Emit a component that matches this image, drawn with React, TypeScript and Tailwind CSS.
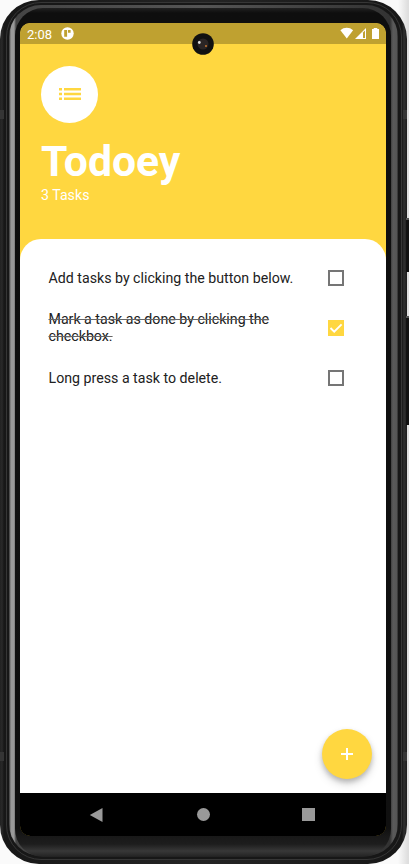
import React from "react";

type Task = { text: string; done: boolean };

const tasks: Task[] = [
  { text: "Add tasks by clicking the button below.", done: false },
  { text: "Mark a task as done by clicking the checkbox.", done: true },
  { text: "Long press a task to delete.", done: false },
];

function StatusBar() {
  return (
    <div className="flex h-[21px] shrink-0 items-center bg-[#bfa130] pl-[7px] pr-[6px] text-white">
      <span className="w-[34px] pt-px text-[13px] leading-none">2:08</span>
      <svg className="block" width="13" height="13" viewBox="0 0 13 13">
        <circle cx="6.5" cy="6.5" r="6.2" fill="#fff" />
        <path d="M3.2 3h2.9v6.8H3.2zM7 3h2.6v2.7H7z" fill="#bfa130" />
      </svg>
      <svg className="ml-auto block" width="40" height="13" viewBox="0 0 40 13">
        <path d="M.4 3.2C4-.1 9.5-.1 13.1 3.2L6.8 11.4z" fill="#fff" />
        <path d="M26 1v11H15z" fill="#fff" />
        <path d="M23 5.4L25 3.4V11H23z" fill="#bfa130" />
        <path d="M32 2h1.7V1h3.6v1H39v10h-7z" fill="#fff" />
      </svg>
    </div>
  );
}

function Checkbox({ done }: { done: boolean }) {
  if (!done) return <div className="size-4 shrink-0 border-2 border-[#757575]" />;
  return (
    <div className="size-4 shrink-0 bg-[#ffd740]">
      <svg className="block" width="16" height="16" viewBox="0 0 16 16">
        <path d="M2.5 8L6.2 11.7L13.6 4.3" fill="none" stroke="#fff" strokeWidth="1.9" />
      </svg>
    </div>
  );
}

function Camera() {
  return (
    <svg className="block" width="22" height="22" viewBox="0 0 22 22">
      <circle cx="11" cy="11" r="10.8" fill="#111" />
      <circle cx="11" cy="11" r="5.5" fill="#2b2525" />
      <circle cx="7.3" cy="9.5" r="1.4" fill="#ddd" />
      <path d="M13 12h2v2h-2z" fill="#a0602c" />
    </svg>
  );
}

function Screen() {
  return (
    <div className="relative flex h-[813px] w-[366px] flex-col rounded-[10px] bg-[#ffd740] [clip-path:inset(0_round_10px)]">
      <StatusBar />
      <header className="h-[195px] shrink-0 pl-[21px] pt-[22px] text-white">
        <div className="flex size-[57px] items-center justify-center rounded-full bg-white">
          <svg className="-mt-px block" width="22" height="12" viewBox="0 0 22 12">
            <path
              d="M0 0h3v2.5H0zM5 0h17v2.5H5zM0 4.8h3v2.4H0zM5 4.8h17v2.4H5zM0 9.5h3V12H0zM5 9.5h17V12H5z"
              fill="#ffd740"
            />
          </svg>
        </div>
        <h1 className="mt-[13px] text-[42.7px] font-bold leading-[51px]">Todoey</h1>
        <p className="text-[14.2px] leading-[17px]">3 Tasks</p>
      </header>
      <main className="flex-1 rounded-t-[21px] bg-white pt-[14px]">
        <ul>
          {tasks.map((task) => (
            <li
              key={task.text}
              className="flex h-[50px] items-center pl-[28.5px] pr-[42px] text-[14.2px] leading-[17px] text-[#212121]"
            >
              <div className="w-[279.5px] shrink-0 pr-[24px]">
                <span className={task.done ? "line-through decoration-[#666] decoration-1" : ""}>{task.text}</span>
              </div>
              <Checkbox done={task.done} />
            </li>
          ))}
        </ul>
      </main>
      <nav className="flex h-[43px] shrink-0 items-center justify-between bg-black pl-[69px] pr-[71px]">
        <svg className="block" width="15" height="16" viewBox="0 0 15 16">
          <path d="M13.5 1v14L.8 8z" fill="#999" />
        </svg>
        <div className="size-[13px] rounded-full bg-[#999]" />
        <div className="size-[13px] bg-[#999]" />
      </nav>
      <button
        aria-label="Add task"
        className="absolute right-[14px] bottom-[57px] flex size-[50px] items-center justify-center rounded-full bg-[#ffd740] shadow-[0_3px_5px_rgba(0,0,0,0.2),0_5px_10px_rgba(0,0,0,0.14)]"
      >
        <svg className="block" width="12" height="12" viewBox="0 0 12 12">
          <path d="M0 6h12M6 0v12" stroke="#fff" strokeWidth="2" />
        </svg>
      </button>
    </div>
  );
}

export default function App() {
  return (
    <div className="relative flex h-[864px] w-[409px] overflow-hidden bg-[linear-gradient(90deg,#fafafa_398px,#dedede_408px)] font-[Roboto,sans-serif]">
      <div className="h-[864px] w-[407px] shrink-0 rounded-[39px] bg-[linear-gradient(90deg,#222_0,#292929_2px,#171717_4px,#242424_50%,#171717_402px,#303030_404px,#1c1c1c_407px)] pl-[6px] pr-[5px] pt-[2px] pb-[4px]">
        <div className="h-[858px] w-[396px] rounded-[35px] border border-[#363636] bg-[#171717] pl-[2px] pr-[3px] pt-[2px] pb-[2px]">
          <div className="h-[851px] w-[389px] rounded-[32px] bg-[linear-gradient(90deg,#333_0,#999_2px,#999_5px,#444_7px,#555_50%,#333_381px,#5a5a5a_384px,#555_388px,#222_389px)] pl-[6px] pr-[7px] pt-[3px]">
            <div className="h-[849px] w-[376px] rounded-[28px] bg-[linear-gradient(180deg,#202020_0,#0e0e0e_5px,#101010_820px,#191919_829px,#1d1d1d_836px,#383838_843px,#222_849px)] pl-[5px] pt-[15px]">
              <Screen />
            </div>
          </div>
        </div>
      </div>
      <div className="z-10 -ml-px flex w-[3px] shrink-0 flex-col gap-[44px] pt-[218px]">
        <div className="h-[54px] border-t-2 border-[#555] bg-[#111]" />
        <div className="h-[109px] border-t-2 border-[#555] bg-[#111]" />
      </div>
      <div className="absolute inset-x-0 top-[33px] flex justify-center pr-[3px]">
        <Camera />
      </div>
      <div className="absolute inset-0 flex flex-col justify-between pr-[2px] pt-[110px] pb-[103px]">
        <div className="flex justify-between">
          <div className="h-[9px] w-1 bg-[#353535]" />
          <div className="h-[9px] w-1 bg-[#353535]" />
        </div>
        <div className="flex justify-between">
          <div className="h-[9px] w-1 bg-[#353535]" />
          <div className="h-[9px] w-1 bg-[#353535]" />
        </div>
      </div>
    </div>
  );
}
